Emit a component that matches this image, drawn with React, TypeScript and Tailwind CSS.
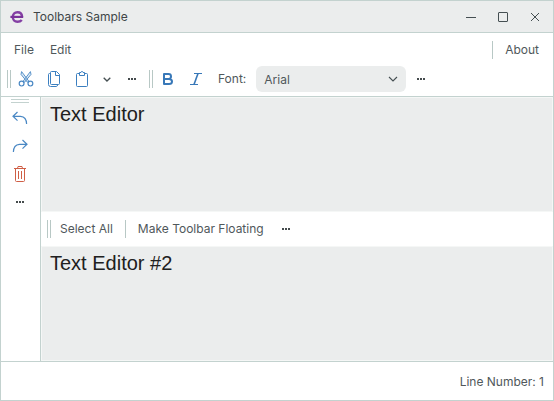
import { useState } from "react";
import type { ReactNode } from "react";

type IconButtonProps = {
  label: string;
  children: ReactNode;
};

function IconButton({ label, children }: IconButtonProps) {
  return (
    <button
      type="button"
      aria-label={label}
      title={label}
      className="flex h-7 w-7 shrink-0 items-center justify-center rounded"
    >
      {children}
    </button>
  );
}

function LogoIcon() {
  return (
    <svg width="14" height="14" viewBox="0 0 14 14" className="shrink-0" aria-hidden="true">
      <path d="M12 6.8C12 3.6 10 2.2 7.4 2.2C4.6 2.2 2.8 4.2 2.8 7C2.8 9.8 4.6 11.8 7.4 11.8C9.2 11.8 10.8 11.2 11.8 10" fill="none" stroke="#8440a4" strokeWidth="2.4" />
      <path d="M0.4 5.8H13.2V8H0.4Z" fill="#7a349a" />
    </svg>
  );
}

function CutIcon() {
  return (
    <svg width="16" height="16" viewBox="0 0 16 16" fill="none" stroke="#4a88c4" aria-hidden="true">
      <path d="M3.6 0.6L3 3.4L9.4 11.2L11 10.4L3.6 0.6ZM12.4 0.6L13 3.4L6.6 11.2L5 10.4L12.4 0.6Z" strokeWidth="0.9" fill="#dceaf6" />
      <circle cx="3.6" cy="12.6" r="2.4" strokeWidth="1.2" />
      <circle cx="12.4" cy="12.6" r="2.4" strokeWidth="1.2" />
    </svg>
  );
}

function CopyIcon() {
  return (
    <svg width="16" height="16" viewBox="0 0 16 16" fill="none" stroke="#3b7fc0" aria-hidden="true">
      <path d="M5.5 0.5H10.5L13.5 3.5V12.5Q13.5 13.5 12.5 13.5H5.5Q4.5 13.5 4.5 12.5V1.5Q4.5 0.5 5.5 0.5ZM9.5 0.5V4.5H13.5" />
      <path d="M4.5 2.5H3.5Q2.5 2.5 2.5 3.5V13.5Q2.5 15.5 4.5 15.5H10.5Q11.5 15.5 11.5 13.5" />
    </svg>
  );
}

function PasteIcon() {
  return (
    <svg width="16" height="16" viewBox="0 0 16 16" fill="none" stroke="#3b7fc0" aria-hidden="true">
      <path d="M5.5 2.5H3.5Q2.5 2.5 2.5 3.5V14.5Q2.5 15.5 3.5 15.5H12.5Q13.5 15.5 13.5 14.5V3.5Q13.5 2.5 12.5 2.5H10.5" />
      <path d="M5.5 4.5V1.5H7L7.5 0.5H8.5L9 1.5H10.5V4.5Z" />
    </svg>
  );
}

function ChevronIcon() {
  return (
    <svg width="10" height="6" viewBox="0 0 10 6" fill="none" stroke="#454f52" strokeWidth="1.1" aria-hidden="true">
      <path d="M1 1L5 5L9 1" />
    </svg>
  );
}

function SmallChevronIcon() {
  return (
    <svg width="8" height="5" viewBox="0 0 8 5" fill="none" stroke="#454f52" strokeWidth="1.3" aria-hidden="true">
      <path d="M0.7 0.7L4 4L7.3 0.7" />
    </svg>
  );
}

function MoreIcon() {
  return (
    <svg width="8" height="2" viewBox="0 0 8 2" fill="#454b4d" aria-hidden="true">
      <path d="M0 0H2V2H0ZM3 0H5V2H3ZM6 0H8V2H6Z" />
    </svg>
  );
}

function BoldIcon() {
  return (
    <svg width="12" height="12" viewBox="0 0 12 12" fill="none" stroke="#3878b8" strokeWidth="2" aria-hidden="true">
      <path d="M2 1H6.5Q9 1 9 3.4T6.5 6H2ZM2 6H7Q10 6 10 8.5T7 11H2Z" strokeLinejoin="round" />
    </svg>
  );
}

function ItalicIcon() {
  return (
    <svg width="12" height="12" viewBox="0 0 12 12" fill="none" stroke="#3878b8" aria-hidden="true">
      <path d="M4 0.5H12M0 11.5H8" strokeWidth="1.2" />
      <path d="M8 0.5L4 11.5" strokeWidth="1.6" />
    </svg>
  );
}

function UndoIcon() {
  return (
    <svg width="16" height="14" viewBox="0 0 16 14" fill="none" stroke="#4a88c4" strokeWidth="1.2" aria-hidden="true">
      <path d="M5.5 1L1 5.3L5.5 9.6M1 5.3H8.5Q14.5 5.8 14.6 13" />
    </svg>
  );
}

function RedoIcon() {
  return (
    <svg width="16" height="14" viewBox="0 0 16 14" fill="none" stroke="#4a88c4" strokeWidth="1.2" aria-hidden="true">
      <path d="M10.5 1L15 5.3L10.5 9.6M15 5.3H7.5Q1.5 5.8 1.4 13" />
    </svg>
  );
}

function TrashIcon() {
  return (
    <svg width="12" height="16" viewBox="0 0 12 16" fill="none" stroke="#cf5f46" aria-hidden="true">
      <path d="M0 2.5H12M3.5 2.5L4 0.5H8L8.5 2.5M1.5 2.5V14.5Q1.5 15.5 2.5 15.5H9.5Q10.5 15.5 10.5 14.5V2.5M4.5 5V13M7.5 5V13" />
    </svg>
  );
}

function Grip() {
  return <span aria-hidden="true" className="h-[18px] w-1 shrink-0 border-x border-[#b8c8c5]" />;
}

function Divider() {
  return <span aria-hidden="true" className="h-[18px] w-px shrink-0 bg-[#b8c8c5]" />;
}

type EditorProps = { label: string; initial: string };

function Editor({ label, initial }: EditorProps) {
  const [text, setText] = useState(initial);
  return (
    <textarea
      aria-label={label}
      value={text}
      onChange={(e) => setText(e.target.value)}
      spellCheck={false}
      className="block min-h-20 w-full flex-1 resize-none border border-[#f5f7f6] bg-[#ebeded] px-2 py-1 font-['Liberation_Sans',Arial,sans-serif] text-[20px] leading-6 text-[#202020] outline-none"
    />
  );
}

export default function App() {
  return (
    <div className="flex min-h-screen flex-col border border-[#c3d2cf] bg-white font-[Inter,sans-serif] text-xs text-[#50585b]">
      <header className="flex h-8 items-center justify-between border-b border-[#c3d2cf] bg-[#ebeded] pl-[9px] text-[#404648]">
        <div className="flex items-center gap-[9px]">
          <LogoIcon />
          <h1>Toolbars Sample</h1>
        </div>
        <div className="flex items-center gap-1 pr-1">
          <IconButton label="Minimize">
            <svg width="10" height="10" viewBox="0 0 10 10" stroke="#454f52" aria-hidden="true"><path d="M0 5.5H10" /></svg>
          </IconButton>
          <IconButton label="Maximize">
            <svg width="10" height="10" viewBox="0 0 10 10" fill="none" stroke="#454f52" aria-hidden="true"><rect x="0.5" y="0.5" width="9" height="9" rx="0.5" /></svg>
          </IconButton>
          <IconButton label="Close">
            <svg width="10" height="10" viewBox="0 0 10 10" stroke="#454f52" aria-hidden="true"><path d="M1 1L9 9M9 1L1 9" /></svg>
          </IconButton>
        </div>
      </header>

      <div className="border-b border-[#c3d2cf]">
        <nav aria-label="Main menu" className="flex h-8 items-center justify-between pt-0.5 pr-1.5 pl-[5px]">
          <div className="flex">
            <button type="button" className="h-7 px-2">File</button>
            <button type="button" className="h-7 px-2">Edit</button>
          </div>
          <div className="flex items-center gap-1">
            <Divider />
            <button type="button" className="h-7 px-2">About</button>
          </div>
        </nav>

        <div className="flex h-[31px] items-start px-1.5">
          <div role="toolbar" aria-label="Clipboard" className="flex h-7 items-center">
            <Grip />
            <div className="flex items-center pl-px">
              <IconButton label="Cut"><CutIcon /></IconButton>
              <IconButton label="Copy"><CopyIcon /></IconButton>
              <IconButton label="Paste"><PasteIcon /></IconButton>
              <button type="button" aria-label="Paste options" className="flex h-6 w-[22px] items-center justify-center"><SmallChevronIcon /></button>
              <IconButton label="More clipboard commands"><MoreIcon /></IconButton>
            </div>
          </div>
          <div role="toolbar" aria-label="Font" className="flex h-7 items-center pl-[3px]">
            <Grip />
            <div className="flex items-center pl-px">
              <IconButton label="Bold"><BoldIcon /></IconButton>
              <IconButton label="Italic"><ItalicIcon /></IconButton>
            </div>
            <label htmlFor="font" className="pr-2.5 pl-2">Font:</label>
            <div className="grid items-center">
              <select
                id="font"
                defaultValue="Arial"
                className="col-start-1 row-start-1 h-[26px] w-[150px] appearance-none rounded-md bg-[#ebeded] px-2 pt-0.5 text-[#50585b]"
              >
                <option>Arial</option>
                <option>Calibri</option>
                <option>Verdana</option>
              </select>
              <span className="pointer-events-none col-start-1 row-start-1 mr-2 justify-self-end"><ChevronIcon /></span>
            </div>
            <div className="pl-px">
              <IconButton label="More font commands"><MoreIcon /></IconButton>
            </div>
          </div>
        </div>
      </div>

      <div className="flex flex-1">
        <div role="toolbar" aria-label="Editing" aria-orientation="vertical" className="flex w-10 shrink-0 flex-col items-center border-r border-[#c3d2cf] pt-0.5 pr-px">
          <span aria-hidden="true" className="mb-px h-1 w-[18px] border-y border-[#c3d2cf]" />
          <IconButton label="Undo"><UndoIcon /></IconButton>
          <IconButton label="Redo"><RedoIcon /></IconButton>
          <IconButton label="Delete"><TrashIcon /></IconButton>
          <IconButton label="More editing commands"><MoreIcon /></IconButton>
        </div>
        <main className="flex min-w-0 flex-1 flex-col">
          <Editor label="First editor" initial="Text Editor" />
          <div role="toolbar" aria-label="Document" className="flex h-[34px] items-center pl-1.5">
            <Grip />
            <button type="button" className="ml-px h-7 px-2">Select All</button>
            <div className="flex items-center gap-1 pl-1">
              <Divider />
              <button type="button" className="h-7 px-2">Make Toolbar Floating</button>
            </div>
            <IconButton label="More document commands"><MoreIcon /></IconButton>
          </div>
          <Editor label="Second editor" initial="Text Editor #2" />
        </main>
      </div>

      <footer className="flex h-[39px] items-center justify-end border-t border-[#c3d2cf] pt-0.5 pr-[9px]">
        <output>Line Number: 1</output>
      </footer>
    </div>
  );
}
